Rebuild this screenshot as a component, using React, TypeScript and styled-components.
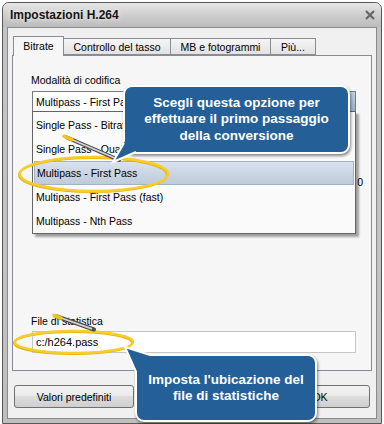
import styled, { createGlobalStyle } from 'styled-components'

const GlobalStyle = createGlobalStyle`
  html, body { margin: 0; padding: 0; background: #ffffff; }
  body { font-family: 'Liberation Sans', Arial, sans-serif; }
`

const UI = `'Liberation Sans', Arial, sans-serif`

const modes = [
  'Single Pass - Bitrate',
  'Single Pass - Quality',
  'Multipass - First Pass',
  'Multipass - First Pass (fast)',
  'Multipass - Nth Pass',
]

const tabs = [
  { label: 'Bitrate', w: 51 },
  { label: 'Controllo del tasso', w: 108 },
  { label: 'MB e fotogrammi', w: 101 },
  { label: 'Più...', w: 46 },
]

const App = () => {
  return (
    <Page>
      <GlobalStyle />
      <Window>
        <TitleBar>
          <Title>Impostazioni H.264</Title>
          <svg width="10" height="10" viewBox="0 0 10 10">
            <path d="M1 1 L9 9 M9 1 L1 9" stroke="#666" strokeWidth="2.2" />
          </svg>
        </TitleBar>
        <Client>
          <TabStrip>
            {tabs.map((t, i) => (
              <Tab key={t.label} $w={t.w} $active={i === 0}>
                {t.label}
              </Tab>
            ))}
          </TabStrip>
          <Panel>
            <FieldLabel>Modalità di codifica</FieldLabel>
            <Combo>
              Multipass - First Pass
              <DropButton />
              <DropList>
                {modes.map((m, i) => (
                  <DropItem key={m} $selected={i === 2}>
                    {m}
                  </DropItem>
                ))}
              </DropList>
            </Combo>
            <ValueRow>0</ValueRow>
            <BottomGroup>
              <FieldLabel>File di statistica</FieldLabel>
              <TextInput>c:/h264.pass</TextInput>
            </BottomGroup>
          </Panel>
          <ButtonRow>
            <Button $w={120}>Valori predefiniti</Button>
            <Spacer />
            <Button $w={100}>OK</Button>
          </ButtonRow>
        </Client>
      </Window>

      <Marks width="384" height="424" viewBox="0 0 384 424">
        <ellipse cx="93" cy="175" rx="74" ry="17" fill="none" stroke="#e9b40c" strokeWidth="2" />
        <ellipse cx="94" cy="174" rx="74" ry="17" fill="none" stroke="#f7cd2a" strokeWidth="2.4" />
        <ellipse cx="73" cy="343" rx="59" ry="11" fill="none" stroke="#e9b40c" strokeWidth="2" />
        <ellipse cx="74" cy="342" rx="59" ry="11" fill="none" stroke="#f7cd2a" strokeWidth="2.4" />
        <line x1="67" y1="137.5" x2="119" y2="160" stroke="#4d4d4d" strokeWidth="4" strokeLinecap="round" />
        <line x1="67" y1="137.5" x2="117" y2="159" stroke="#d4d4d4" strokeWidth="1.8" />
        <line x1="64" y1="136.2" x2="72" y2="139.6" stroke="#f3c320" strokeWidth="3.5" strokeLinecap="round" />
        <line x1="57" y1="316.5" x2="94" y2="329.5" stroke="#4d4d4d" strokeWidth="4" strokeLinecap="round" />
        <line x1="57" y1="316.5" x2="92" y2="328.8" stroke="#d4d4d4" strokeWidth="1.8" />
        <line x1="54" y1="315.5" x2="61" y2="318" stroke="#f3c320" strokeWidth="3.5" strokeLinecap="round" />
      </Marks>

      <Callout $x={123} $y={85} $w={227} $h={69}>
        <Tail width="30" height="32" style={{ left: -14, top: 48 }}>
          <polygon points="14,6 2,27 25,17 25,6" fill="#245f98" />
          <polyline points="13,8 2,27 25,17" fill="none" stroke="#fff" strokeWidth="2" />
        </Tail>
        <span>
          Scegli questa opzione per
          <br />
          effettuare il primo passaggio
          <br />
          della conversione
        </span>
      </Callout>

      <Callout $x={135} $y={354} $w={182} $h={68}>
        <Tail width="30" height="32" style={{ left: -14, top: -12 }}>
          <polygon points="15,30 2,3 27,11 27,30" fill="#245f98" />
          <polyline points="13,28 2,3 27,11" fill="none" stroke="#fff" strokeWidth="2" />
        </Tail>
        <span>
          Imposta l'ubicazione del
          <br />
          file di statistiche
        </span>
      </Callout>
    </Page>
  )
}

const Page = styled.div`
  position: relative;
  width: 384px;
  height: 424px;
  overflow: hidden;
  background: #ffffff;
`

const Window = styled.div`
  box-sizing: border-box;
  margin: 2px 0 0 2px;
  width: 380px;
  height: 422px;
  border: 1px solid #575757;
  border-radius: 7px 7px 0 0;
  background: linear-gradient(#e2e2e2, #c4c4c4 26px, #bfbfbf);
  display: flex;
  flex-direction: column;
`

const TitleBar = styled.div`
  height: 24px;
  display: flex;
  align-items: center;
  justify-content: space-between;
  padding: 0 6px 0 7px;
  border-radius: 6px 6px 0 0;
  background: linear-gradient(#e6e6e6, #d0d0d0 45%, #bcbcbc);
`

const Title = styled.span`
  font: bold 12px ${UI};
  color: #141414;
  text-shadow: 0 0 5px rgba(255, 255, 255, 0.9);
`

const Client = styled.div`
  flex: 1;
  margin: 0 4px 4px;
  border: 1px solid #8a8a8a;
  background: #f0f0f0;
  display: flex;
  flex-direction: column;
  padding: 8px 4px 0 4px;
  font: 10.5px ${UI};
  color: #000;
`

const TabStrip = styled.div`
  display: flex;
  align-items: flex-end;
  height: 19px;
  padding-left: 1px;
  position: relative;
  z-index: 1;
`

const Tab = styled.div<{ $w: number; $active: boolean }>`
  box-sizing: border-box;
  width: ${({ $w }) => $w}px;
  height: ${({ $active }) => ($active ? 20 : 17)}px;
  margin-bottom: ${({ $active }) => ($active ? -1 : 0)}px;
  margin-left: -1px;
  &:first-child { margin-left: 0; }
  border: 1px solid #898c95;
  border-bottom: ${({ $active }) => ($active ? 'none' : '1px solid #898c95')};
  background: ${({ $active }) => ($active ? '#f6f6f6' : 'linear-gradient(#f5f5f5, #e2e2e2)')};
  display: flex;
  align-items: center;
  justify-content: center;
  padding-bottom: ${({ $active }) => ($active ? 1 : 0)}px;
`

const Panel = styled.div`
  box-sizing: border-box;
  height: 316px;
  border: 1px solid #898c95;
  background: #f6f6f6;
  display: flex;
  flex-direction: column;
  padding: 18px 15px 17px 19px;
`

const FieldLabel = styled.div`
  line-height: 13px;
  margin-left: -1px;
`

const Combo = styled.div`
  position: relative;
  box-sizing: border-box;
  height: 21px;
  margin-top: 4px;
  border: 1px solid #7a7a7a;
  background: #ffffff;
  display: flex;
  align-items: center;
  padding-left: 3px;
`

const DropButton = styled.div`
  margin-left: auto;
  align-self: stretch;
  width: 17px;
  background: linear-gradient(#c3cfdd, #9eb0c6);
  border-left: 1px solid #8898ad;
`

const DropList = styled.div`
  position: absolute;
  top: 100%;
  left: -1px;
  right: -1px;
  box-sizing: border-box;
  height: 123px;
  padding: 1px 0;
  border: 1px solid #646464;
  background: #fafafa;
  box-shadow: 3px 3px 2px rgba(0, 0, 0, 0.35);
  z-index: 2;
`

const DropItem = styled.div<{ $selected: boolean }>`
  box-sizing: border-box;
  height: 24px;
  display: flex;
  align-items: center;
  padding-left: ${({ $selected }) => ($selected ? 2 : 3)}px;
  margin: 0 ${({ $selected }) => ($selected ? 1 : 0)}px;
  border: ${({ $selected }) => ($selected ? '1px solid #a3b1c4' : 'none')};
  background: ${({ $selected }) =>
    $selected ? 'linear-gradient(#d9e2ed, #cbd6e3 50%, #bfcbda)' : 'transparent'};
`

const ValueRow = styled.div`
  margin-top: 64px;
  margin-right: -7px;
  line-height: 13px;
  text-align: right;
`

const BottomGroup = styled.div`
  margin-top: auto;
  display: flex;
  flex-direction: column;
  gap: 3px;
`

const TextInput = styled.div`
  box-sizing: border-box;
  height: 22px;
  border: 1px solid #c6c6c6;
  background: #ffffff;
  display: flex;
  align-items: center;
  padding-left: 3px;
  font-size: 11px;
`

const ButtonRow = styled.div`
  display: flex;
  gap: 8px;
  margin-top: 14px;
  padding: 0 2px;
`

const Spacer = styled.div`
  flex: 1;
`

const Button = styled.div<{ $w: number }>`
  box-sizing: border-box;
  width: ${({ $w }) => $w}px;
  height: 23px;
  border: 1px solid #707070;
  border-radius: 3px;
  background: linear-gradient(#f2f2f2, #ebebeb 45%, #dddddd 50%, #cfcfcf);
  display: flex;
  align-items: center;
  justify-content: center;
`

const Marks = styled.svg`
  position: absolute;
  left: 0;
  top: 0;
  pointer-events: none;
  z-index: 5;
`

const Callout = styled.div<{ $x: number; $y: number; $w: number; $h: number }>`
  position: absolute;
  left: ${({ $x }) => $x}px;
  top: ${({ $y }) => $y}px;
  width: ${({ $w }) => $w}px;
  height: ${({ $h }) => $h}px;
  box-sizing: border-box;
  border: 2px solid #ffffff;
  border-radius: 9px;
  background: #245f98;
  box-shadow: 1px 2px 3px rgba(0, 0, 0, 0.45);
  color: #ffffff;
  font: bold 13.5px ${UI};
  line-height: 16.5px;
  text-align: center;
  display: flex;
  align-items: center;
  justify-content: center;
  z-index: 6;
`

const Tail = styled.svg`
  position: absolute;
  overflow: visible;
`

export default App
